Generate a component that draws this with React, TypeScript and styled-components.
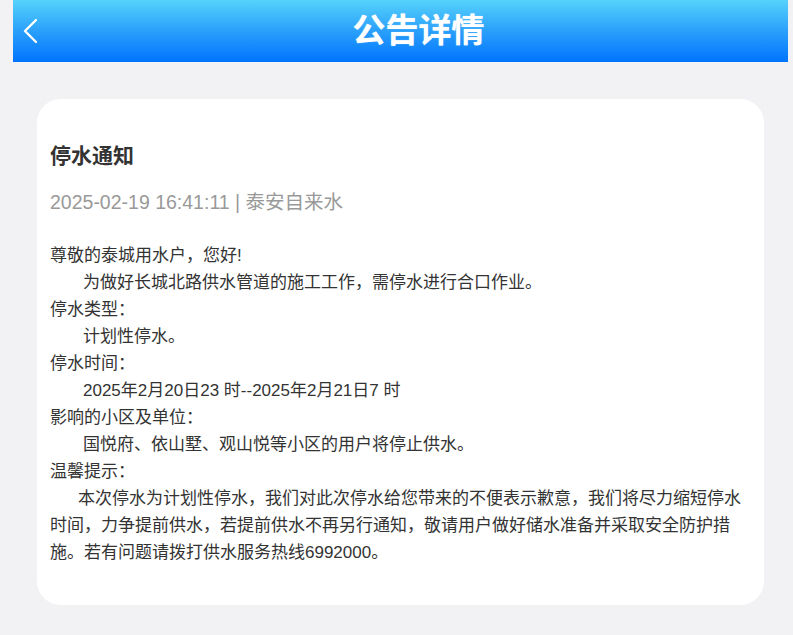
import styled, { createGlobalStyle } from 'styled-components'

const GlobalStyle = createGlobalStyle`
  html, body {
    margin: 0;
    padding: 0;
    background: #f2f2f4;
  }
  body {
    font-family: "Liberation Sans", Arial, "Noto Sans CJK SC", sans-serif;
  }
`

const Page = styled.div`
  padding: 0 5px 31px 13px;
  min-height: 635px;
  box-sizing: border-box;
`

const Header = styled.header`
  height: 62px;
  display: flex;
  align-items: center;
  background: linear-gradient(180deg, #56d2fc 0%, #2aa0fb 50%, #0074fe 100%);
`

const BackButton = styled.button`
  width: 36px;
  height: 62px;
  padding: 0 0 0 10px;
  border: none;
  background: transparent;
  display: flex;
  align-items: center;
  cursor: pointer;

  svg {
    display: block;
  }
`

const HeaderTitle = styled.h1`
  flex: 1;
  margin: 0;
  text-align: center;
  color: #fff;
  font-size: 33px;
  font-weight: 700;
  line-height: 62px;
  text-shadow: 0 0 1px rgba(210, 235, 255, 0.8);
`

const Card = styled.article`
  margin: 37px 24px 0 24px;
  background: #fff;
  border-radius: 24px;
  padding: 42px 20px 39px 13px;
`

const Title = styled.h2`
  margin: 0;
  font-size: 21px;
  line-height: 30px;
  font-weight: 700;
  color: #333;
`

const Meta = styled.div`
  margin-top: 16px;
  font-size: 19.5px;
  line-height: 30px;
  color: #999;
`

const Body = styled.div`
  margin-top: 25px;
  font-size: 17px;
  line-height: 27px;
  color: #333;
`

const Line = styled.p<{ $indent?: number }>`
  margin: 0;
  padding-left: ${p => (p.$indent && p.$indent > 0 ? p.$indent : 0)}px;
  text-indent: ${p => (p.$indent && p.$indent < 0 ? -p.$indent : 0)}px;
`

const lines: { text: string; indent?: number }[] = [
  { text: '尊敬的泰城用水户，您好!' },
  { text: '为做好长城北路供水管道的施工工作，需停水进行合口作业。', indent: 33 },
  { text: '停水类型：' },
  { text: '计划性停水。', indent: 33 },
  { text: '停水时间：' },
  { text: '2025年2月20日23 时--2025年2月21日7 时', indent: 33 },
  { text: '影响的小区及单位：' },
  { text: '国悦府、依山墅、观山悦等小区的用户将停止供水。', indent: 33 },
  { text: '温馨提示：' },
  {
    text: '本次停水为计划性停水，我们对此次停水给您带来的不便表示歉意，我们将尽力缩短停水时间，力争提前供水，若提前供水不再另行通知，敬请用户做好储水准备并采取安全防护措施。若有问题请拨打供水服务热线6992000。',
    indent: -28,
  },
]

export default function App() {
  return (
    <>
      <GlobalStyle />
      <Page>
        <Header>
          <BackButton aria-label="返回">
            <svg width="16" height="26" viewBox="0 0 16 26" fill="none">
              <path d="M13 2 L2 13 L13 24" stroke="#fff" strokeWidth="2.4" strokeLinecap="round" strokeLinejoin="round" />
            </svg>
          </BackButton>
          <HeaderTitle>公告详情</HeaderTitle>
        </Header>
        <Card>
          <Title>停水通知</Title>
          <Meta>2025-02-19 16:41:11 | 泰安自来水</Meta>
          <Body>
            {lines.map((l, i) => (
              <Line key={i} $indent={l.indent}>
                {l.text}
              </Line>
            ))}
          </Body>
        </Card>
      </Page>
    </>
  )
}
